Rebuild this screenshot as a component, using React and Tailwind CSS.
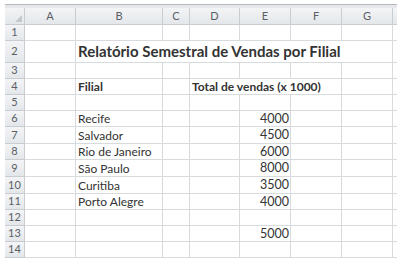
const COLS = ["A", "B", "C", "D", "E", "F", "G"];

const ROWS = [
  { n: 1 },
  { n: 2, title: "Relatório Semestral de Vendas por Filial" },
  { n: 3 },
  { n: 4, filial: "Filial", total: "Total de vendas (x 1000)", bold: true },
  { n: 5 },
  { n: 6, filial: "Recife", value: "4000" },
  { n: 7, filial: "Salvador", value: "4500" },
  { n: 8, filial: "Rio de Janeiro", value: "6000" },
  { n: 9, filial: "São Paulo", value: "8000" },
  { n: 10, filial: "Curitiba", value: "3500" },
  { n: 11, filial: "Porto Alegre", value: "4000" },
  { n: 12 },
  { n: 13, value: "5000" },
  { n: 14 },
];

const cell = "border-r border-b border-[#d8dbde] text-[#333] leading-none flex items-center whitespace-nowrap overflow-visible";
const head = "border-r border-b border-[#c9cdd1] bg-gradient-to-b from-[#f3f4f6] to-[#e4e7ea] text-[11px] text-[#5a5f66] flex items-center justify-center";

function Row({ row }) {
  const h = row.n === 2 ? "h-[22px]" : [7, 9, 10].includes(row.n) ? "h-[17px]" : "h-[16px]";
  const size = row.bold ? "text-[12px] font-bold" : "text-[12px]";
  return (
    <>
      <div className={`${head} ${h}`}>{row.n}</div>
      <div className={`${cell} ${h}`}></div>
      {row.title ? (
        <div className={`${cell} ${h} col-span-6 pl-[2px] text-[15px] font-bold text-[#222]`}>
          {row.title}
        </div>
      ) : (
        <>
          <div className={`${cell} ${h} ${size} pl-[2px] pt-[1px]`}>{row.filial}</div>
          <div className={`${cell} ${h}`}></div>
          {row.total ? (
            <div className={`${cell} ${h} ${size} col-span-3 pl-[2px] pt-[1px]`}>{row.total}</div>
          ) : (
            <>
              <div className={`${cell} ${h}`}></div>
              <div className={`${cell} ${h} text-[12.5px] justify-end pr-[1px] pt-[1px]`}>{row.value}</div>
              <div className={`${cell} ${h}`}></div>
            </>
          )}
          <div className={`${cell} ${h}`}></div>
        </>
      )}
      <div className={`border-b border-[#d8dbde] ${h}`}></div>
    </>
  );
}

export default function App() {
  return (
    <div className="w-[402px] h-[265px] bg-white pt-[4px] pl-[5px] overflow-hidden" style={{ fontFamily: "Lato, 'Open Sans', sans-serif" }}>
      <div className="w-[392px] h-[4px] bg-[#e6e8eb] border-t border-[#b4b8bd]"></div>
      <div className="grid grid-cols-[20px_51px_87px_27px_50px_51px_51px_51px_4px] w-[392px]">
        <div className={`${head} h-[17px] relative`}>
          <span className="absolute right-[2px] bottom-[2px] w-0 h-0 border-l-[7px] border-l-transparent border-b-[7px] border-b-[#c3c7cc]"></span>
        </div>
        {COLS.map((c) => (
          <div key={c} className={`${head} h-[17px]`}>{c}</div>
        ))}
        <div className={`${head} h-[17px] border-r-0`}></div>
        {ROWS.map((r) => (
          <Row key={r.n} row={r} />
        ))}
      </div>
    </div>
  );
}
